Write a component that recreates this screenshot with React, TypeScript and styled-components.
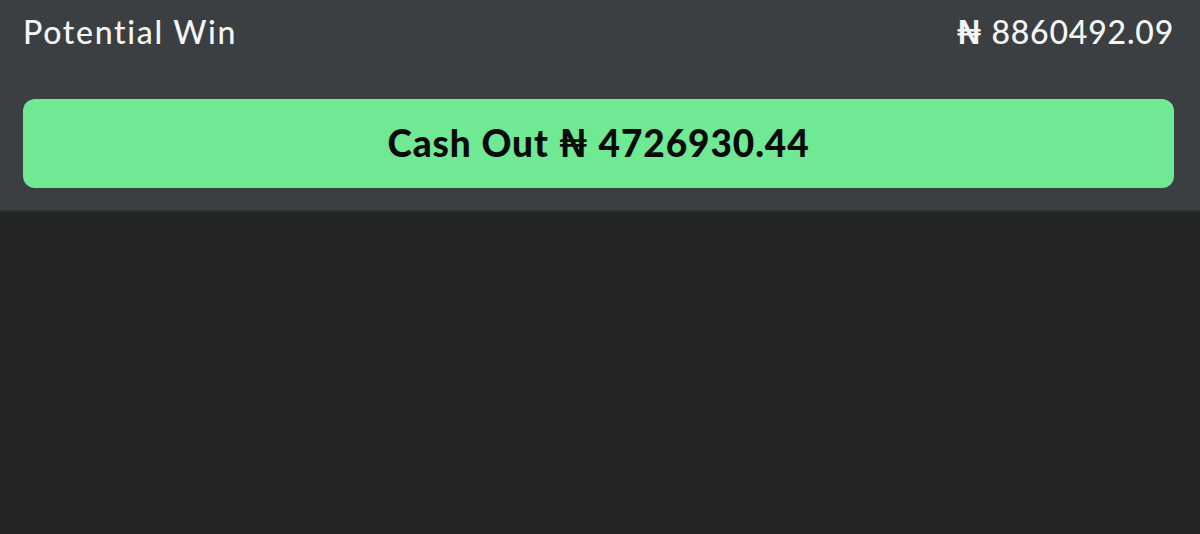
import React from "react";
import styled, { createGlobalStyle } from "styled-components";

const Global = createGlobalStyle`
  html, body { margin: 0; padding: 0; background: #232524; }
  body { font-family: "Lato", "Noto Sans", "DejaVu Sans", sans-serif; }
`;

const Page = styled.div`
  width: 1200px;
  height: 534px;
  background: #232524;
  display: flex;
  flex-direction: column;
`;

const Panel = styled.section`
  background: #3b3f42;
  border-bottom: 2px solid #2f3234;
  padding: 11px 26px 22px 23px;
  display: flex;
  flex-direction: column;
  gap: 48px;
`;

const Row = styled.div`
  display: flex;
  justify-content: space-between;
  align-items: center;
  height: 40px;
`;

const Label = styled.span`
  color: #f4f5f5;
  font-size: 32px;
  font-weight: 500;
  letter-spacing: 1.7px;
`;

const Amount = styled.span`
  color: #f4f5f5;
  font-size: 32px;
  font-weight: 500;
  letter-spacing: 0.8px;
`;

const Currency = styled.span`
  font-weight: 900;
`;

const CashOut = styled.button`
  height: 89px;
  width: 100%;
  border: none;
  border-radius: 12px;
  background: #6fe993;
  color: #0a0a0a;
  font-family: "Lato", "Noto Sans", "DejaVu Sans", sans-serif;
  font-size: 37px;
  font-weight: 900;
  letter-spacing: 0.9px;
  display: flex;
  align-items: center;
  justify-content: center;
  padding: 0 0 2px;
  cursor: pointer;
`;

export default function App() {
  return (
    <>
      <Global />
      <Page>
        <Panel>
          <Row>
            <Label>Potential Win</Label>
            <Amount>
              <Currency>₦</Currency> 8860492.09
            </Amount>
          </Row>
          <CashOut>Cash Out ₦ 4726930.44</CashOut>
        </Panel>
      </Page>
    </>
  );
}
